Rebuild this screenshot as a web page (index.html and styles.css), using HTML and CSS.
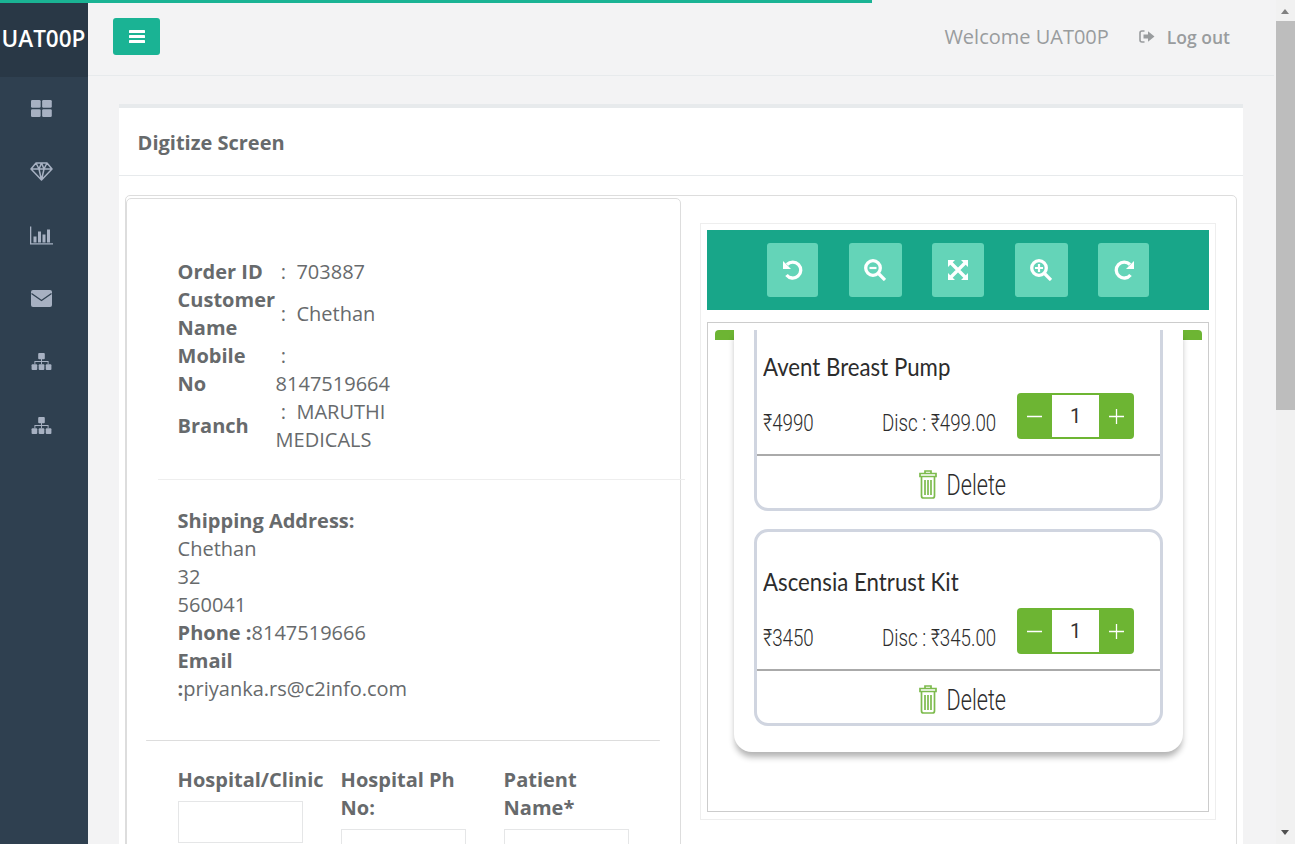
FILE: index.html
```html
<!DOCTYPE html>
<html lang="en">
<head>
<meta charset="utf-8">
<title>Digitize Screen</title>
<link rel="stylesheet" href="styles.css">
</head>
<body>
<div class="progress"></div>
<div class="shell">
  <nav class="sidebar">
    <div class="logo">UAT00P</div>
    <a class="nav-item"><svg class="ic-a" viewBox="0 0 20 16"><rect x="0" y="0" width="9.2" height="7.4" rx="1.2"/><rect x="10.6" y="0" width="9.2" height="7.4" rx="1.2"/><rect x="0" y="8.6" width="9.2" height="7.4" rx="1.2"/><rect x="10.6" y="8.6" width="9.2" height="7.4" rx="1.2"/></svg></a>
    <a class="nav-item"><svg class="ic-b" viewBox="0 0 23 19"><path class="line" d="M6 1h11l5 6-10.500 11L1 7zM1 7h21M6 1l3 6 2.500 11L14 7l3-6M9 7l2.500-6L14 7"/></svg></a>
    <a class="nav-item"><svg class="ic-b" viewBox="0 0 23 18"><path d="M0 0h1.300v16.700H23V18H0z"/><rect x="3.500" y="10" width="3" height="6"/><rect x="8" y="5" width="3" height="11"/><rect x="12.500" y="8" width="3" height="8"/><rect x="17" y="3" width="3" height="13"/></svg></a>
    <a class="nav-item"><svg class="ic-a" viewBox="0 0 21 17"><rect width="21" height="17" rx="2"/><path class="cut" d="M0.500 3.500 10.500 10.500 20.500 3.500"/></svg></a>
    <a class="nav-item"><svg class="ic-a" viewBox="0 0 21 18"><rect x="7" y="0" width="7" height="6.500" rx="1"/><rect x="0" y="12" width="6" height="6" rx="1"/><rect x="7.500" y="12" width="6" height="6" rx="1"/><rect x="15" y="12" width="6" height="6" rx="1"/><path d="M10 6h1v2.500h7v3.500h-1V9.500h-6V12h-1V9.500H4V12H3V8.500h7z"/></svg></a>
    <a class="nav-item"><svg class="ic-a" viewBox="0 0 21 18"><rect x="7" y="0" width="7" height="6.500" rx="1"/><rect x="0" y="12" width="6" height="6" rx="1"/><rect x="7.500" y="12" width="6" height="6" rx="1"/><rect x="15" y="12" width="6" height="6" rx="1"/><path d="M10 6h1v2.500h7v3.500h-1V9.500h-6V12h-1V9.500H4V12H3V8.500h7z"/></svg></a>
  </nav>

  <main class="main">
    <header class="topbar">
      <button class="menu-btn" type="button"><svg class="bars" viewBox="0 0 16 13"><rect width="16" height="3" rx=".6"/><rect y="5" width="16" height="3" rx=".6"/><rect y="10" width="16" height="3" rx=".6"/></svg></button>
      <span class="welcome">Welcome UAT00P</span>
      <a class="logout"><svg class="signout" viewBox="0 0 16 13"><path d="M5.500 1H3a2 2 0 0 0-2 2v7a2 2 0 0 0 2 2h2.500" class="so-line"/><path d="M4.500 4.500H9V1.200L15.500 6.500 9 11.800V8.500H4.500z"/></svg>Log out</a>
    </header>

    <section class="card">
      <h2 class="card-title">Digitize Screen</h2>
      <div class="panel">
        <div class="details">
          <table class="info">
            <tr><th>Order ID</th><td>&nbsp;:&nbsp; 703887</td></tr>
            <tr><th>Customer Name</th><td>&nbsp;:&nbsp; Chethan</td></tr>
            <tr><th>Mobile No</th><td>&nbsp;:&nbsp; 8147519664</td></tr>
            <tr><th>Branch</th><td>&nbsp;:&nbsp; MARUTHI MEDICALS</td></tr>
          </table>
          <hr class="rule-wide">
          <div class="address">
            <b>Shipping Address:</b><br>
            Chethan<br>
            32<br>
            560041<br>
            <b>Phone :</b>8147519666<br>
            <b>Email</b><br>
            <b>:</b>priyanka.rs@c2info.com
          </div>
          <hr class="rule-form">
          <div class="form-grid">
            <div class="field"><label>Hospital/Clinic</label><input type="text"></div>
            <div class="field"><label>Hospital Ph<br>No:</label><input type="text"></div>
            <div class="field"><label>Patient<br>Name*</label><input type="text"></div>
          </div>
        </div>

        <div class="viewer">
          <div class="toolbar">
            <button class="tool w51" type="button"><svg class="tool-ic" viewBox="0 0 22 22"><path class="ring" d="M5 5.500A8 8 0 1 1 4.500 16"/><path class="solid" d="M1 2v8h8z"/></svg></button>
            <button class="tool w53" type="button"><svg class="tool-ic" viewBox="0 0 22 22"><circle class="ring" cx="9" cy="9" r="7.300"/><path class="ring" d="M14.500 14.500 21 21"/><path class="ring thin" d="M5.500 9h7"/></svg></button>
            <button class="tool w52" type="button"><svg class="tool-ic" viewBox="0 0 22 22"><path class="solid" d="M1 1h7L1 8zM21 1v7l-7-7zM1 21v-7l7 7zM21 21h-7l7-7z"/><path class="ring" d="M4 4l14 14M18 4 4 18"/></svg></button>
            <button class="tool w53" type="button"><svg class="tool-ic" viewBox="0 0 22 22"><circle class="ring" cx="9" cy="9" r="7.300"/><path class="ring" d="M14.500 14.500 21 21"/><path class="ring thin" d="M5 9h8M9 5v8"/></svg></button>
            <button class="tool w51" type="button"><svg class="tool-ic" viewBox="0 0 22 22"><path class="ring" d="M17 5.500A8 8 0 1 0 17.500 16"/><path class="solid" d="M21 2v8h-8z"/></svg></button>
          </div>
          <div class="shot-frame">
            <div class="shot">
              <div class="sheet">
                <article class="item first">
                  <h3 class="item-name"><span class="name-text">Avent Breast Pump</span></h3>
                  <div class="item-row">
                    <span class="price"><span class="narrow">₹4990</span></span>
                    <span class="disc"><span class="narrow">Disc : ₹499.00</span></span>
                    <div class="qty"><span class="qty-btn"><svg class="qty-ic" viewBox="0 0 15 15"><path d="M0 7.500h15"/></svg></span><span class="qty-val">1</span><span class="qty-btn"><svg class="qty-ic" viewBox="0 0 15 15"><path d="M0 7.500h15M7.500 0v15"/></svg></span></div>
                  </div>
                  <div class="item-del"><svg class="trash" viewBox="0 0 18 29"><path d="M6 3V1h6v2M1 3.500h16v3H1zM2.500 6.500h13V26a2 2 0 0 1-2 2h-9a2 2 0 0 1-2-2zM6 10v15M9 10v15M12 10v15"/></svg><span class="del-text">Delete</span></div>
                </article>
                <article class="item">
                  <h3 class="item-name"><span class="name-text">Ascensia Entrust Kit</span></h3>
                  <div class="item-row">
                    <span class="price"><span class="narrow">₹3450</span></span>
                    <span class="disc"><span class="narrow">Disc : ₹345.00</span></span>
                    <div class="qty"><span class="qty-btn"><svg class="qty-ic" viewBox="0 0 15 15"><path d="M0 7.500h15"/></svg></span><span class="qty-val">1</span><span class="qty-btn"><svg class="qty-ic" viewBox="0 0 15 15"><path d="M0 7.500h15M7.500 0v15"/></svg></span></div>
                  </div>
                  <div class="item-del"><svg class="trash" viewBox="0 0 18 29"><path d="M6 3V1h6v2M1 3.500h16v3H1zM2.500 6.500h13V26a2 2 0 0 1-2 2h-9a2 2 0 0 1-2-2zM6 10v15M9 10v15M12 10v15"/></svg><span class="del-text">Delete</span></div>
                </article>
              </div>
            </div>
          </div>
        </div>
      </div>
    </section>
  </main>

  <div class="scrollbar">
    <span class="arrow-up"></span>
    <div class="thumb"></div>
    <span class="arrow-down"></span>
  </div>
</div>
</body>
</html>
```
FILE: styles.css
```css
* { box-sizing: border-box; }
html, body { margin: 0; height: 100%; overflow: hidden; }
body { font-family: "Open Sans", sans-serif; color: #676a6c; background: #f3f3f4; }

.progress { position: fixed; top: 0; left: 0; width: 872px; height: 3px; background: #1ab394; z-index: 5; }
.shell { display: flex; height: 844px; }

/* sidebar */
.sidebar { flex: 0 0 88px; background: #2f4050; }
.logo { height: 77px; padding-right: 1px; background: #293846; color: #fff; font-size: 22.500px; font-weight: 600; line-height: 77px; text-align: center; white-space: nowrap; }
.nav-item { display: flex; height: 63.300px; align-items: center; justify-content: center; padding-right: 6px; fill: #a7b1c2; }
.ic-a { width: 21px; height: 17px; }
.ic-b { width: 23px; height: 19px; }
.line { fill: none; stroke: #a7b1c2; stroke-width: 1.5; stroke-linejoin: round; }
.cut { fill: none; stroke: #2f4050; stroke-width: 1.3; }

/* main */
.main { flex: 1; min-width: 0; overflow: hidden; }
.topbar { display: flex; align-items: center; height: 76px; margin-right: 2px; padding: 0 44px 2px 25px; border-bottom: 1px solid #e7eaec; }
.menu-btn { display: flex; align-items: center; justify-content: center; width: 47px; height: 37px; padding: 0; border: 0; border-radius: 3px; background: #1ab394; }
.bars { width: 16px; height: 13px; fill: #fff; }
.welcome { margin-left: auto; font-size: 20px; color: #999c9e; }
.logout { display: flex; align-items: center; margin-left: 30px; font-size: 17.500px; font-weight: 600; color: #999c9e; }
.signout { width: 16px; height: 13px; margin-right: 12px; fill: #999c9e; }
.so-line { fill: none; stroke: #999c9e; stroke-width: 1.6; }

.card { margin: 28px 33px 0 31px; border-top: 4px solid #e7eaec; background: #fff; }
.card-title { margin: 0; height: 68px; padding-left: 18.600px; border-bottom: 1px solid #e7eaec; font-size: 20px; font-weight: 700; line-height: 70px; color: #676a6c; }
.panel { display: flex; gap: 19px; margin: 19px 6px 0; padding: 1px 20px 0 0; border: 1px solid #ddd; border-radius: 5px; align-items: flex-start; }

/* left column */
.details { flex: 0 0 555px; height: 800px; margin-top: 1px; padding: 59px 0 0 50.600px; border: 1px solid #ddd; border-radius: 5px; font-size: 20px; line-height: 28px; }
.info { width: 212px; border-collapse: collapse; table-layout: fixed; }
.info th { width: 98px; padding: 0; text-align: left; font-weight: 700; }
.info td { padding: 0; }
.rule-wide { margin: 25px -5px 0 -20px; border: 0; border-top: 1px solid #eee; }
.address { width: 260px; margin-top: 27px; }
.rule-form { margin: 37px 20px 0 -32px; border: 0; border-top: 1px solid #ddd; border-radius: 2px; }
.form-grid { display: grid; grid-template-columns: repeat(3, 163px); margin-top: 25px; align-items: start; }
.field label { display: block; font-weight: 700; white-space: nowrap; }
.field input { display: block; width: 125px; height: 42px; margin-top: 7px; border: 1px solid #e5e6e7; background: #fff; }

/* right column */
.viewer { flex: 0 0 516px; margin-top: 26px; padding: 6px; border: 1px solid #eee; height: 597px; }
.toolbar { display: flex; justify-content: center; gap: 30.500px; height: 80px; padding-top: 13px; background: #18a689; }
.tool { display: flex; align-items: center; justify-content: center; height: 54px; padding: 0; border: 0; border-radius: 3px; background: #64d4b8; }
.w51 { width: 51px; }
.w52 { width: 52px; }
.w53 { width: 53px; }
.tool-ic { width: 22px; height: 22px; }
.ring { fill: none; stroke: #fff; stroke-width: 3.300; }
.ring.thin { stroke-width: 2.200; }
.solid { fill: #fff; }
.shot-frame { height: 490px; margin-top: 12px; padding-top: 7px; border: 1px solid #ccc; background: #fff; }
.shot { position: relative; height: 440px; overflow: hidden; padding: 0 25px 16px 26px; }
.shot::before { content: ""; position: absolute; top: 0; left: 7px; right: 6px; height: 10px; border-radius: 4px 4px 0 0; background: #6db533; }
.sheet { position: relative; height: 422px; padding: 0 20px; border-radius: 0 0 18px 18px; background: #fff; box-shadow: 0 6px 6px -1px rgba(0, 0, 0, .3); overflow: hidden; }
.item { height: 197px; margin-top: 18px; padding: 0 0 0 6px; border: 3px solid #d0d5e0; border-radius: 14px; color: #2c2c2c; font-family: Lato, sans-serif; }
.item.first { margin-top: -16px; }
.item-name { margin: 0; padding-top: 32px; height: 65px; font-size: 25px; font-weight: 400; line-height: 34px; white-space: nowrap; }
.name-text { display: inline-block; transform: scaleX(.89); transform-origin: left center; }
.item-row { display: flex; align-items: center; height: 72px; padding-right: 25px; font-family: Roboto, sans-serif; font-size: 24px; font-weight: 300; white-space: nowrap; }
.price { width: 119px; margin-top: 9px; }
.disc { width: 135px; margin-top: 9px; }
.narrow { display: inline-block; transform: scaleX(.78); transform-origin: left center; }
.qty { display: flex; flex: 0 0 117px; height: 46px; margin-top: -4px; border-radius: 4px; background: #6db533; padding: 2px 0; }
.qty-btn { display: flex; flex: 0 0 35px; align-items: center; justify-content: center; }
.qty-val { flex: 1; background: #fff; text-align: center; font-family: Roboto, sans-serif; font-size: 20px; line-height: 42px; font-weight: 400; color: #333; }
.qty-ic { width: 15px; height: 15px; fill: none; stroke: #fff; stroke-width: 1.300; }
.item-del { display: flex; align-items: center; justify-content: center; height: 53px; margin-left: -6px; border-top: 2px solid #aaa; padding: 6px 0 0 8px; }
.trash { flex: none; width: 18px; height: 29px; fill: none; stroke: #7dbb4d; stroke-width: 1.700; }
.del-text { display: block; font-family: Roboto, sans-serif; font-size: 30px; font-weight: 300; line-height: 40px; transform: scaleX(.72); margin: 0 -11.500px 0 -2.500px; }

/* scrollbar */
.scrollbar { position: relative; flex: 0 0 19px; background: #f1f1f1; }
.thumb { height: 389px; margin-top: 21px; background: #bdbdbd; }
.arrow-up, .arrow-down { position: absolute; left: 5px; width: 0; height: 0; border-left: 4.500px solid transparent; border-right: 4.500px solid transparent; }
.arrow-up { top: 9px; border-bottom: 5px solid #808080; }
.arrow-down { bottom: 9px; border-top: 5px solid #505050; }
```
